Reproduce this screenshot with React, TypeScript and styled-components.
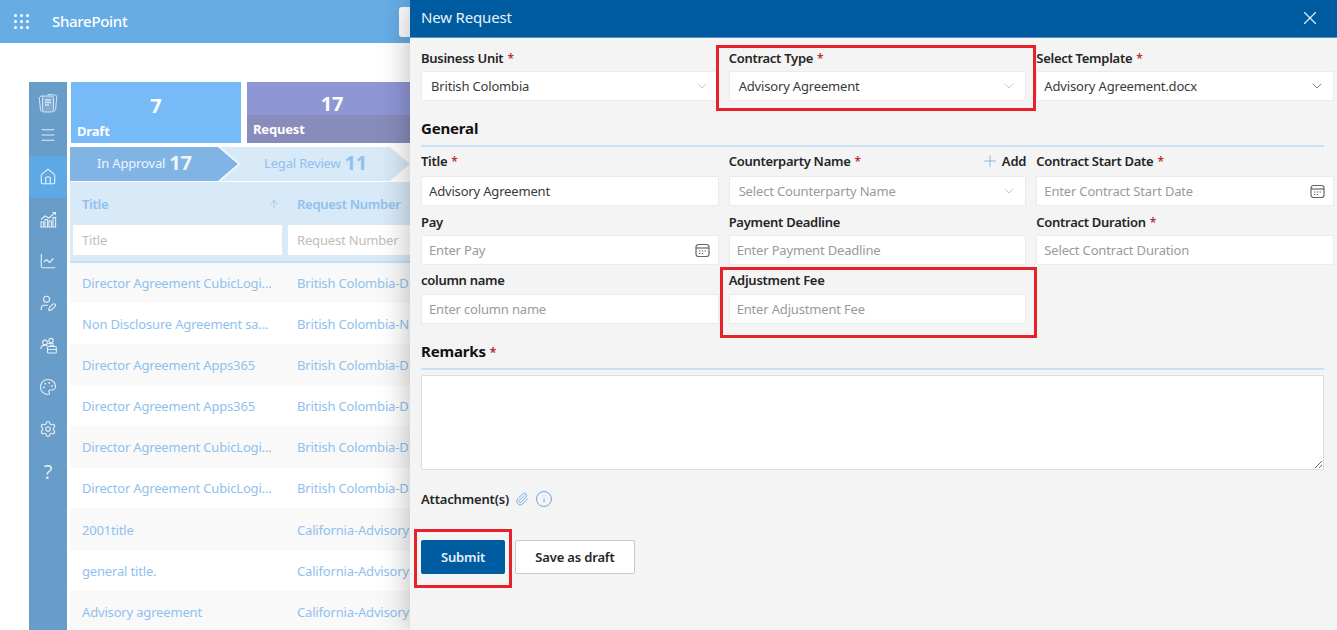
import React from "react";
import styled, { createGlobalStyle } from "styled-components";
import { ChevronDown, Home, Info, LineChart, Menu, Paperclip, Palette, Plus, Settings, UserPen, X, ArrowUp } from "lucide-react";

const Global = createGlobalStyle`
  html, body { margin: 0; height: 100%; overflow: hidden; background: #fff; }
  * { box-sizing: border-box; }
  body { font-family: "Noto Sans", "Open Sans", sans-serif; letter-spacing: -.17px; }
  input, button, textarea { letter-spacing: -.17px; }
`;

const Page = styled.div`position: relative; width: 1337px; height: 630px; overflow: hidden;`;
const SuiteBar = styled.header`
  height: 43px; background: #66ade6; display: flex; align-items: center; padding-left: 14px; color: #fff;
`;
const Waffle = styled.div`
  width: 15px; display: grid; grid-template-columns: repeat(3, 3px); gap: 3px; margin-right: 23px;
  span { width: 3px; height: 3px; background: #fff; border-radius: 50%; }
`;
const Brand = styled.span`font-size: 15px; font-weight: 500; padding-bottom: 2px; width: 75px; letter-spacing: -.3px;`;
const SuiteButton = styled.div`
  margin-left: 272px; width: 30px; height: 30px; background: #fff; border-radius: 3px;
`;
const Body = styled.div`display: flex; padding: 39px 0 0 29px; gap: 3px;`;
const Rail = styled.nav`
  width: 38px; height: 548px; background: #689dc9; display: flex; flex-direction: column; color: #e4eef7; flex: none;
`;
const RailItem = styled.div<{ $active?: boolean; $h?: number; $mb?: number }>`
  height: ${p => p.$h ?? 42}px; margin-bottom: ${p => p.$mb ?? 0}px; display: flex; align-items: center; justify-content: center;
  background: ${p => (p.$active ? "#5fa8e6" : "transparent")};
`;
const Question = styled.span`font-size: 20px; font-weight: 400; font-family: "Open Sans", sans-serif; color: #e4eef7;`;
const Content = styled.main`width: 1200px; flex: none;`;
const Cards = styled.div`display: flex; gap: 6px; padding-left: 1px;`;
const Card = styled.div<{ $bg: string }>`
  width: 170px; height: 61px; background: ${p => p.$bg}; color: #fff; display: flex; flex-direction: column;
`;
const CardNum = styled.div<{ $h: number }>`
  height: ${p => p.$h}px; display: flex; align-items: center; justify-content: center;
  font-size: 20px; font-weight: 700; padding-top: 10px;
`;
const CardLabel = styled.div<{ $bg?: string }>`
  flex: 1; background: ${p => p.$bg ?? "transparent"}; padding: 0 6px; font-size: 13px; font-weight: 700;
  display: flex; align-items: center;
`;
const Steps = styled.div`display: flex; margin-top: 4px; height: 34px;`;
const Step = styled.div<{ $first?: boolean; $bg: string; $fg: string }>`
  width: ${p => (p.$first ? 168 : 190)}px; margin-left: ${p => (p.$first ? 0 : -18)}px;
  background: ${p => p.$bg}; color: ${p => p.$fg};
  clip-path: ${p => p.$first
    ? "polygon(0 0, 148px 0, 168px 50%, 148px 100%, 0 100%)"
    : "polygon(0 0, 170px 0, 190px 50%, 170px 100%, 0 100%, 20px 50%)"};
  display: flex; align-items: center; gap: 4px; padding: 0 0 3px ${p => (p.$first ? 27 : 44)}px;
  font-size: 13px; white-space: nowrap;
  b { font-size: 20px; font-weight: 700; }
`;
const TableHead = styled.div`
  margin-top: 1px; height: 81px; background: #d8e9f8; border-bottom: 2px solid #c6e0f6;
  display: grid; grid-template-columns: 215px 215px; grid-template-rows: 43px 30px;
`;
const HeadCell = styled.div`
  display: flex; align-items: center; justify-content: space-between; padding: 0 5px 0 12px;
  font-size: 13px; font-weight: 600; color: #8fc1ee; white-space: nowrap; overflow: hidden; letter-spacing: -.28px;
`;
const FilterCell = styled.div`padding: 0 3px;`;
const FilterInput = styled.input`
  width: 100%; height: 30px; border: none; background: #fff; padding: 0 9px; outline: none;
  font: 13px "Noto Sans", sans-serif;
  &::placeholder { color: #bdbdbd; opacity: 1; }
`;
const Row = styled.div<{ $alt: boolean; $h: number }>`
  height: ${p => p.$h}px; background: ${p => (p.$alt ? "#f9f9f9" : "#fff")};
  display: grid; grid-template-columns: 215px 215px; align-items: center;
  font-size: 13px; color: #8fc1ee; white-space: nowrap;
`;
const RowCell = styled.div`padding-left: 12px; overflow: hidden;`;

const Panel = styled.aside`
  position: absolute; top: 0; left: 410px; right: 0; bottom: 0; background: #f4f4f4;
  box-shadow: 0 0 30px rgba(0,0,0,.28); display: flex; flex-direction: column;
`;
const PanelHead = styled.div`
  height: 38px; flex: none; background: #005ca1; border-bottom: 1px solid #5a94c4; color: #e8f1f8;
  display: flex; align-items: center; justify-content: space-between; padding: 0 16px 3px 11px; font-size: 15px;
  svg { margin-top: 2px; }
`;
const Form = styled.div`padding: 10px 3px 0 11px; display: flex; flex-direction: column;`;
const FormRow = styled.div<{ $gap: number; $top?: number }>`
  display: grid; grid-template-columns: repeat(3, 1fr); column-gap: 10px; margin-top: ${p => p.$top ?? 0}px;
  --field-gap: ${p => p.$gap}px;
`;
const Field = styled.div`display: flex; flex-direction: column; gap: var(--field-gap); min-width: 0;`;
const LabelLine = styled.div`display: flex; justify-content: space-between; align-items: center;`;
const Label = styled.label`
  height: 20px; line-height: 20px; font-size: 13px; font-weight: 600; color: #252525; white-space: nowrap;
  letter-spacing: -.28px;
`;
const Req = styled.span`color: #b4323c; margin-left: 4px; font-size: 12px;`;
const AddLink = styled.span`
  display: flex; align-items: center; gap: 3px; font-size: 13px; font-weight: 600; color: #252525;
  svg { color: #6ea2d8; }
`;
const Control = styled.div<{ $pad?: number; $muted?: boolean }>`
  height: 30px; background: #fff; border: 1px solid #ebebeb; display: flex; align-items: center;
  justify-content: space-between; padding: 0 8px 0 ${p => (p.$pad ?? 8) - 1}px;
  font-size: 13px; color: ${p => (p.$muted ? "#9a9a9a" : "#3a3a3a")}; white-space: nowrap;
`;
const TextInput = styled.input`
  height: 30px; width: 100%; background: #fff; border: 1px solid #ebebeb; padding: 0 7px; outline: none;
  font: 13px "Noto Sans", sans-serif; color: #3a3a3a;
  &::placeholder { color: #9a9a9a; opacity: 1; }
`;
const Section = styled.h2<{ $top: number }>`
  margin: ${p => p.$top}px 10px 0 0; height: 30px; padding-bottom: 7px; border-bottom: 2px solid #c9dff2;
  font-size: 15px; font-weight: 700; line-height: 22px; color: #111;
`;
const Remarks = styled.textarea`
  display: block; width: 903px; height: 95px; margin-top: 5px; background: #fff; border: 1px solid #dcdcdc;
  border-radius: 2px; outline: none;
`;
const AttachLine = styled.div`
  display: flex; align-items: center; gap: 6px; margin-top: 19px; height: 20px; font-size: 13px; font-weight: 600; color: #252525;
  svg { color: #5f9fdc; }
`;
const Actions = styled.div`display: flex; gap: 10px; margin-top: 31px;`;
const Primary = styled.button`
  width: 84px; height: 34px; background: #005ca1; color: #e8f1f8; border: none; border-radius: 2px;
  font: 600 13px "Noto Sans", sans-serif;
`;
const Secondary = styled.button`
  width: 120px; height: 34px; background: #fff; color: #252525; border: 1px solid #c8c8c8; border-radius: 2px;
  font: 600 13px "Noto Sans", sans-serif;
`;
const Highlight = styled.div<{ $x: number; $y: number; $w: number; $h: number }>`
  position: absolute; left: ${p => p.$x}px; top: ${p => p.$y}px; width: ${p => p.$w}px; height: ${p => p.$h}px;
  border: 3px solid #e5222a; pointer-events: none;
`;

const rows: [string, string, number][] = [
  ["Director Agreement CubicLogi...", "British Colombia-D", 40],
  ["Non Disclosure Agreement sa...", "British Colombia-N", 41],
  ["Director Agreement Apps365", "British Colombia-D", 42],
  ["Director Agreement Apps365", "British Colombia-D", 40],
  ["Director Agreement CubicLogi...", "British Colombia-D", 42],
  ["Director Agreement CubicLogi...", "British Colombia-D", 40],
  ["2001title", "California-Advisory", 43],
  ["general title.", "California-Advisory", 40],
  ["Advisory agreement", "California-Advisory", 41],
];

const Chevron = ({ dark }: { dark?: boolean }) => (
  <ChevronDown size={16} strokeWidth={1} color={dark ? "#444" : "#aaa"} />
);
const Calendar = () => (
  <svg width="15" height="15" viewBox="0 0 15 15" fill="none" stroke="#666" strokeWidth="1.2">
    <rect x="1" y="1.5" width="13" height="12" rx="2.5" />
    <path d="M1 5h13" />
    <path d="M4 8h1.4M6.8 8h1.4M9.6 8h1.4M4 10.5h1.4M6.8 10.5h1.4" strokeWidth="1.1" />
  </svg>
);
const Star = () => <Req>*</Req>;

const DocsIcon = () => (
  <svg width="20" height="21" viewBox="0 0 20 21" fill="none" stroke="#d6e4f0" strokeWidth="1">
    <path d="M2 3.5l3-.8M18.5 2.5l-4-.9-5 .1" />
    <path d="M1.2 4l1.3 13c.1 1 .8 1.6 1.8 1.7" />
    <path d="M18.8 3l-1.2 13.5c-.1 1-.8 1.6-1.8 1.7" />
    <rect x="4.5" y="3" width="11" height="16" rx="1.5" fill="#7fadd2" />
    <path d="M7 7h6M7 9.5h6M7 12h4" strokeWidth="1.3" />
  </svg>
);
const BarsIcon = () => (
  <svg width="17" height="17" viewBox="0 0 17 17" fill="none" stroke="#e4eef7" strokeWidth="1.1">
    <rect x="1" y="11" width="2.6" height="5" />
    <rect x="5" y="8.5" width="2.6" height="7.5" />
    <rect x="9" y="10" width="2.6" height="6" />
    <rect x="13" y="6.5" width="2.6" height="9.5" />
    <path d="M1 8.5l4-3.5 4 2 6-5.5M12.5 1.5H15.5V4" />
  </svg>
);
const TeamIcon = () => (
  <svg width="17" height="17" viewBox="0 0 17 17" fill="none" stroke="#e4eef7" strokeWidth="1.1">
    <circle cx="5" cy="5.5" r="2.4" />
    <circle cx="11" cy="3.6" r="2.2" />
    <path d="M.8 12c.3-2.6 1.9-3.9 4.2-3.9 1 0 1.8.2 2.5.7M8 6.8c1-.5 4-.7 5.5.2" />
    <rect x="7.5" y="9.5" width="8.8" height="6.5" rx=".8" />
    <path d="M10.3 9.5V8.200h3.200v1.300M7.500 12.500h8.800" />
  </svg>
);

export default function App() {
  return (
    <Page>
      <Global />
      <SuiteBar>
        <Waffle>{Array.from({ length: 9 }, (_, i) => <span key={i} />)}</Waffle>
        <Brand>SharePoint</Brand>
        <SuiteButton />
      </SuiteBar>
      <Body>
        <Rail>
          <RailItem><DocsIcon /></RailItem>
          <RailItem $h={22} $mb={10}><Menu size={18} strokeWidth={1.3} /></RailItem>
          <RailItem $active><Home size={18} strokeWidth={1.5} /></RailItem>
          <RailItem><BarsIcon /></RailItem>
          <RailItem><LineChart size={18} strokeWidth={1.5} /></RailItem>
          <RailItem><UserPen size={18} strokeWidth={1.5} /></RailItem>
          <RailItem><TeamIcon /></RailItem>
          <RailItem><Palette size={18} strokeWidth={1.5} /></RailItem>
          <RailItem><Settings size={18} strokeWidth={1.5} /></RailItem>
          <RailItem><Question>?</Question></RailItem>
        </Rail>
        <Content>
          <Cards>
            <Card $bg="#76bbf8">
              <CardNum $h={36}>7</CardNum>
              <CardLabel>Draft</CardLabel>
            </Card>
            <Card $bg="#8e96d4">
              <CardNum $h={33}>17</CardNum>
              <CardLabel $bg="#878cbb">Request</CardLabel>
            </Card>
          </Cards>
          <Steps>
            <Step $first $bg="#80b4e5" $fg="#eef5fb">In Approval <b>17</b></Step>
            <Step $bg="#d8e9f8" $fg="#8fc1ee">Legal Review <b>11</b></Step>
          </Steps>
          <TableHead>
            <HeadCell>Title <ArrowUp size={12} strokeWidth={1.5} /></HeadCell>
            <HeadCell>Request Number</HeadCell>
            <FilterCell><FilterInput placeholder="Title" /></FilterCell>
            <FilterCell><FilterInput placeholder="Request Number" /></FilterCell>
          </TableHead>
          {rows.map(([title, num, h], i) => (
            <Row key={i} $alt={i % 2 === 0} $h={h}>
              <RowCell>{title}</RowCell>
              <RowCell>{num}</RowCell>
            </Row>
          ))}
        </Content>
      </Body>
      <Panel>
        <PanelHead>
          New Request
          <X size={22} strokeWidth={1.2} color="#e8f1f8" />
        </PanelHead>
        <Form>
          <FormRow $gap={3}>
            <Field>
              <Label>Business Unit<Star /></Label>
              <Control $pad={10}>British Colombia<Chevron /></Control>
            </Field>
            <Field>
              <Label>Contract Type<Star /></Label>
              <Control $pad={10}>Advisory Agreement<Chevron /></Control>
            </Field>
            <Field>
              <Label>Select Template<Star /></Label>
              <Control>Advisory Agreement.docx<Chevron dark /></Control>
            </Field>
          </FormRow>
          <Section $top={16}>General</Section>
          <FormRow $gap={5} $top={4}>
            <Field>
              <Label>Title<Star /></Label>
              <TextInput defaultValue="Advisory Agreement" />
            </Field>
            <Field>
              <LabelLine>
                <Label>Counterparty Name<Star /></Label>
                <AddLink><Plus size={18} strokeWidth={1} />Add</AddLink>
              </LabelLine>
              <Control $pad={10} $muted>Select Counterparty Name<Chevron /></Control>
            </Field>
            <Field>
              <Label>Contract Start Date<Star /></Label>
              <Control $muted>Enter Contract Start Date<Calendar /></Control>
            </Field>
          </FormRow>
          <FormRow $gap={3} $top={6}>
            <Field>
              <Label>Pay</Label>
              <Control $muted>Enter Pay<Calendar /></Control>
            </Field>
            <Field>
              <Label>Payment Deadline</Label>
              <TextInput placeholder="Enter Payment Deadline" />
            </Field>
            <Field>
              <Label>Contract Duration<Star /></Label>
              <TextInput placeholder="Select Contract Duration" />
            </Field>
          </FormRow>
          <FormRow $gap={4} $top={5}>
            <Field>
              <Label>column name</Label>
              <TextInput placeholder="Enter column name" />
            </Field>
            <Field>
              <Label>Adjustment Fee</Label>
              <TextInput placeholder="Enter Adjustment Fee" />
            </Field>
          </FormRow>
          <Section $top={16}>Remarks<Star /></Section>
          <Remarks />
          <AttachLine>
            Attachment(s)
            <Paperclip size={14} strokeWidth={1.4} />
            <Info size={18} strokeWidth={1.2} />
          </AttachLine>
          <Actions>
            <Primary>Submit</Primary>
            <Secondary>Save as draft</Secondary>
          </Actions>
        </Form>
      </Panel>
      <Highlight $x={716} $y={45} $w={320} $h={66} />
      <Highlight $x={720} $y={267} $w={317} $h={71} />
      <Highlight $x={414} $y={529} $w={98} $h={59} />
    </Page>
  );
}
